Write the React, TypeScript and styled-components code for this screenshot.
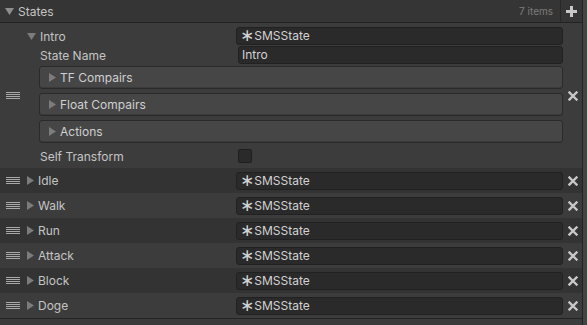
import React from "react";
import styled, { createGlobalStyle } from "styled-components";

const Global = createGlobalStyle`
  html, body { margin: 0; padding: 0; background: #3b3b3b; }
  body { font-family: Inter, "Noto Sans", sans-serif; }
  * { box-sizing: border-box; }
`;

const Frame = styled.div`
  display: flex;
  width: 587px;
  height: 325px;
  overflow: hidden;
  background: #3b3b3b;
`;

const List = styled.div`
  width: 583px;
  border-right: 1px solid #232323;
  display: flex;
  flex-direction: column;
`;

const Strip = styled.div`
  flex: 1;
  background: #444444;
`;

const Header = styled.div`
  height: 23px;
  display: flex;
  align-items: center;
  background: #353535;
  border-bottom: 1px solid #232323;
  color: #c4c4c4;
  font-size: 12px;
`;

const HeaderTitle = styled.div`
  flex: 1;
  display: flex;
  align-items: center;
  gap: 4px;
  padding-left: 5px;
`;

const Count = styled.span`
  font-size: 10px;
  color: #7d7d7d;
  margin-right: 7px;
`;

const PlusButton = styled.div`
  width: 22px;
  height: 100%;
  border-left: 1px solid #272727;
  display: flex;
  align-items: center;
  justify-content: center;
`;

const Items = styled.div`
  display: flex;
  flex-direction: column;
  border-bottom: 1px solid #242424;
`;

const Element = styled.div<{ $odd?: boolean }>`
  display: flex;
  align-items: center;
  background: ${(p) => (p.$odd ? "#333333" : "#3c3c3c")};
`;

const Handle = styled.div`
  width: 24px;
  padding-left: 6px;
  display: flex;
  flex-direction: column;
  gap: 1px;
`;

const HandleLine = styled.div`
  width: 14px;
  height: 1px;
  background: #a8a8a8;
`;

const Content = styled.div<{ $expanded?: boolean }>`
  flex: 1;
  min-width: 0;
  display: flex;
  flex-direction: column;
  gap: 1px;
  padding: ${(p) => (p.$expanded ? "4px 0 3px" : "0")};
`;

const Remove = styled.div`
  width: 19px;
  display: flex;
  align-items: center;
  justify-content: center;
  padding-left: 1px;
`;

const PropRow = styled.div<{ $height: number; $label: number; $indent?: number }>`
  display: grid;
  grid-template-columns: ${(p) => p.$label}px 1fr;
  align-items: center;
  height: ${(p) => p.$height}px;
  margin-left: ${(p) => p.$indent ?? 0}px;
`;

const FoldLabel = styled.div`
  display: flex;
  align-items: center;
  gap: 4px;
  padding-left: 3px;
  color: #c4c4c4;
  font-size: 12px;
`;

const PlainLabel = styled.div`
  padding-left: 1px;
  color: #c4c4c4;
  font-size: 12px;
`;

const Field = styled.div`
  height: 18px;
  background: #2a2a2a;
  border: 1px solid #212121;
  border-radius: 3px;
  padding-left: 3px;
  color: #d2d2d2;
  font-size: 12px;
  line-height: 16px;
  white-space: nowrap;
`;

const Star = styled.span`
  display: inline-block;
  font-family: "DejaVu Sans", sans-serif;
  font-size: 17px;
  line-height: 16px;
  height: 16px;
  vertical-align: top;
  transform: translateY(-1.5px);
`;

const Nested = styled.div`
  margin-left: 15px;
  display: flex;
  flex-direction: column;
  gap: 4px;
  margin-top: 1px;
`;

const Box = styled.div`
  height: 23px;
  background: #464646;
  border: 1px solid #2a2a2a;
  border-radius: 3px;
  display: flex;
  align-items: center;
  gap: 4px;
  padding-left: 9px;
  color: #d0d0d0;
  font-size: 12px;
  box-shadow: inset 0 -1px 0 #3a3a3a;
`;

const Checkbox = styled.div`
  width: 14px;
  height: 14px;
  background: #2a2a2a;
  border: 1px solid #1e1e1e;
  border-radius: 2px;
`;

const Right = () => (
  <svg width="7" height="9" viewBox="0 0 7 9">
    <polygon points="0,0 7,4.5 0,9" fill="#7c7c7c" />
  </svg>
);

const Down = ({ color = "#7c7c7c" }: { color?: string }) => (
  <svg width="9" height="7" viewBox="0 0 9 7">
    <polygon points="0,0 9,0 4.5,7" fill={color} />
  </svg>
);

const Plus = () => (
  <svg width="11" height="11" viewBox="0 0 11 11">
    <rect x="4" y="0" width="3" height="11" fill="#c8c8c8" />
    <rect x="0" y="4" width="11" height="3" fill="#c8c8c8" />
  </svg>
);

const Cross = () => (
  <svg width="10" height="10" viewBox="0 0 10 10">
    <path d="M1.5 1.5 L8.5 8.5 M8.5 1.5 L1.5 8.5" stroke="#c8c8c8" strokeWidth="2.4" strokeLinecap="square" />
  </svg>
);

const Grip = () => (
  <Handle>
    <HandleLine />
    <HandleLine />
    <HandleLine />
    <HandleLine />
  </Handle>
);

const TypeField = () => (
  <Field>
    <Star>∗</Star>SMSState
  </Field>
);

const collapsed = ["Idle", "Walk", "Run", "Attack", "Block", "Doge"];

export default function App() {
  return (
    <Frame>
      <Global />
      <List>
        <Header>
          <HeaderTitle>
            <Down color="#8e8e8e" />
            States
          </HeaderTitle>
          <Count>7 items</Count>
          <PlusButton>
            <Plus />
          </PlusButton>
        </Header>
        <Items>
          <Element>
            <Grip />
            <Content $expanded>
              <PropRow $height={18} $label={212}>
                <FoldLabel>
                  <Down />
                  Intro
                </FoldLabel>
                <TypeField />
              </PropRow>
              <PropRow $height={18} $label={199} $indent={15}>
                <PlainLabel>State Name</PlainLabel>
                <Field>Intro</Field>
              </PropRow>
              <Nested>
                <Box>
                  <Right />
                  TF Compairs
                </Box>
                <Box>
                  <Right />
                  Float Compairs
                </Box>
                <Box>
                  <Right />
                  Actions
                </Box>
                <PropRow $height={18} $label={199}>
                  <PlainLabel>Self Transform</PlainLabel>
                  <Checkbox />
                </PropRow>
              </Nested>
            </Content>
            <Remove>
              <Cross />
            </Remove>
          </Element>
          {collapsed.map((name, i) => (
            <Element key={name} $odd={i % 2 === 0}>
              <Grip />
              <Content>
                <PropRow $height={25} $label={212}>
                  <FoldLabel>
                    <Right />
                    {name}
                  </FoldLabel>
                  <TypeField />
                </PropRow>
              </Content>
              <Remove>
                <Cross />
              </Remove>
            </Element>
          ))}
        </Items>
      </List>
      <Strip />
    </Frame>
  );
}
